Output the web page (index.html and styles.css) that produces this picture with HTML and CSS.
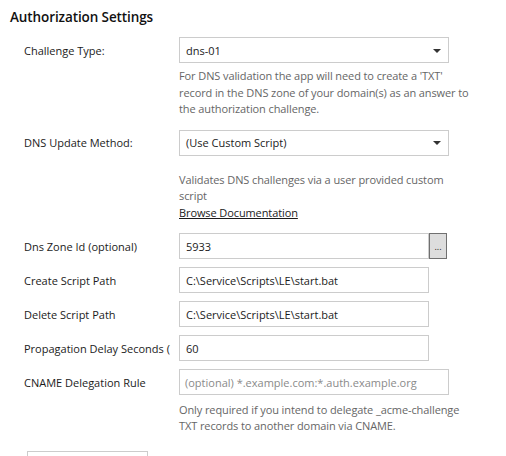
FILE: index.html
```html
<!DOCTYPE html>
<html>
<head>
<meta charset="utf-8">
<link rel="stylesheet" href="styles.css">
</head>
<body>
<div class="panel">
  <h2 class="title">Authorization Settings</h2>
  <div class="form">
    <div class="row">
      <label class="label">Challenge Type:</label>
      <div class="select wide"><span>dns-01</span><span class="caret"></span></div>
    </div>
    <div class="help help1">For DNS validation the app will need to create a 'TXT'<br>record in the DNS zone of your domain(s) as an answer to<br>the authorization challenge.</div>

    <div class="row row2">
      <label class="label">DNS Update Method:</label>
      <div class="select wide"><span>(Use Custom Script)</span><span class="caret"></span></div>
    </div>
    <div class="help help2">Validates DNS challenges via a user provided custom<br>script<br><a class="link" href="#">Browse Documentation</a></div>

    <div class="row row3">
      <label class="label">Dns Zone Id (optional)</label>
      <div class="combo"><div class="input narrow">5933</div><div class="dots">...</div></div>
    </div>
    <div class="row">
      <label class="label">Create Script Path</label>
      <div class="input narrow">C:\Service\Scripts\LE\start.bat</div>
    </div>
    <div class="row">
      <label class="label">Delete Script Path</label>
      <div class="input narrow">C:\Service\Scripts\LE\start.bat</div>
    </div>
    <div class="row">
      <label class="label clip">Propagation Delay Seconds (</label>
      <div class="input narrow">60</div>
    </div>
    <div class="row">
      <label class="label">CNAME Delegation Rule</label>
      <div class="input wide placeholder">(optional) *.example.com:*.auth.example.org</div>
    </div>
    <div class="help help3">Only required if you intend to delegate _acme-challenge<br>TXT records to another domain via CNAME.</div>
  </div>
  <div class="footer"><div class="btn"></div></div>
</div>
</body>
</html>
```

FILE: styles.css
```css
html, body {
  margin: 0;
  padding: 0;
  background: #ffffff;
}
body {
  width: 506px;
  height: 456px;
  overflow: hidden;
  font-family: "Open Sans", "Noto Sans", sans-serif;
  font-size: 11px;
  color: #1b1b1b;
}
.panel {
  padding: 7px 0 0 10px;
}
.title {
  margin: 0;
  font-size: 13.5px;
  font-weight: 600;
  line-height: 20px;
  color: #111;
  letter-spacing: -0.1px;
}
.form {
  padding-left: 14px;
  margin-top: 10px;
  display: flex;
  flex-direction: column;
  gap: 8px;
}
.row {
  display: flex;
  align-items: center;
  height: 26px;
}
.label {
  width: 155px;
  flex: none;
  white-space: nowrap;
  overflow: hidden;
}
.label.clip {
  width: 149px;
  margin-right: 6px;
}
.select, .input {
  box-sizing: border-box;
  height: 26px;
  border: 1px solid #cccccc;
  background: #fff;
  padding: 0 6px;
  display: flex;
  align-items: center;
  white-space: nowrap;
  overflow: hidden;
}
.wide { width: 270px; }
.narrow { width: 250px; }
.select {
  justify-content: space-between;
  padding-right: 7px;
}
.caret {
  width: 0;
  height: 0;
  border-left: 4px solid transparent;
  border-right: 4px solid transparent;
  border-top: 4px solid #333;
  margin-top: 1px;
}
.combo {
  display: flex;
}
.dots {
  box-sizing: border-box;
  width: 18px;
  height: 26px;
  background: #dddddd;
  border: 1px solid #707070;
  font-size: 9px;
  display: flex;
  align-items: flex-end;
  justify-content: center;
  padding-bottom: 7px;
  line-height: 9px;
  color: #222;
}
.placeholder {
  color: #8a8a8a;
  padding-left: 5px;
}
.help {
  margin-left: 155px;
  color: #666666;
  line-height: 16.5px;
  white-space: nowrap;
  letter-spacing: -0.1px;
}
.help1 { margin-top: -3px; }
.row2 { margin-top: 4px; }
.help2 { margin-top: 8px; }
.row3 { margin-top: 4px; }
.help3 { margin-top: -1px; line-height: 16px; }
.link {
  color: #1b1b1b;
  text-decoration: underline;
}
.footer {
  padding-left: 17px;
  margin-top: 17px;
}
.btn {
  width: 121px;
  height: 26px;
  border: 1px solid #cccccc;
  box-sizing: border-box;
  background: #fff;
}
```
